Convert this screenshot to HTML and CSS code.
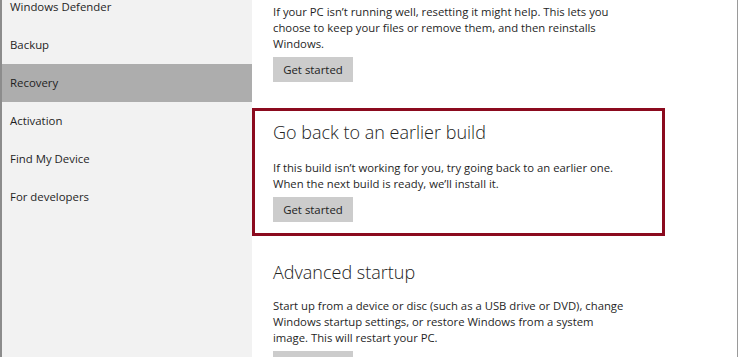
FILE: index.html
```html
<!DOCTYPE html>
<html lang="en">
<head>
  <meta charset="UTF-8">
  <title>Update &amp; security - Recovery</title>
  <link rel="stylesheet" href="styles.css">
</head>
<body>

  <div class="window">
    <div class="sidebar">
      <ul class="nav">
        <li>Windows Defender</li>
        <li>Backup</li>
        <li class="active">Recovery</li>
        <li>Activation</li>
        <li>Find My Device</li>
        <li>For developers</li>
      </ul>
    </div>

    <div class="content">
      <div class="section first">
        <p>If your PC isn’t running well, resetting it might help. This lets you
          choose to keep your files or remove them, and then reinstalls
          Windows.</p>
        <button class="btn">Get started</button>
      </div>

      <div class="section highlight">
        <h2>Go back to an earlier build</h2>
        <p>If this build isn’t working for you, try going back to an earlier one.
          When the next build is ready, we’ll install it.</p>
        <button class="btn">Get started</button>
      </div>

      <div class="section last">
        <h2>Advanced startup</h2>
        <p>Start up from a device or disc (such as a USB drive or DVD), change
          Windows startup settings, or restore Windows from a system
          image. This will restart your PC.</p>
        <button class="btn">Restart now</button>
      </div>
    </div>
  </div>

</body>
</html>
```

FILE: styles.css
```css
html, body {
  margin: 0;
  height: 357px;
  overflow: hidden;
  background: #fff;
}
body {
  font-family: "Open Sans", "Noto Sans", Arial, sans-serif;
  color: #1f1f1f;
}
.window {
  display: flex;
  width: 737px;
  height: 357px;
  border-right: 1px solid #9a9a9a;
}
.sidebar {
  width: 250px;
  flex-shrink: 0;
  background: #f2f2f2;
  border-left: 2px solid #8c8c8c;
}
.nav {
  list-style: none;
  margin: -12px 0 0;
  padding: 0;
}
.nav li {
  height: 38px;
  line-height: 38px;
  padding-left: 8px;
  font-size: 11.4px;
}
.nav li.active {
  background: #adadad;
}
.content {
  flex: 1;
}
.section {
  width: 389px;
  padding: 0 0 0 18px;
  border: 3px solid transparent;
}
.section.first {
  margin-top: -3px;
  padding-top: 7px;
  padding-bottom: 23px;
  border-top: 0;
}
.section.highlight {
  border-color: #8b0a1e;
  padding-top: 8px;
  padding-bottom: 11px;
}
.section.last {
  padding-top: 20px;
}
.section h2 {
  margin: 0 0 15px;
  font-size: 18px;
  font-weight: 300;
  line-height: 26px;
  color: #222;
}
.section.last h2 {
  margin-bottom: 13px;
}
.section p {
  margin: 0;
  max-width: 352px;
  font-size: 11.3px;
  line-height: 16px;
}
.btn {
  display: block;
  margin-top: 5px;
  width: 80px;
  height: 25px;
  padding: 0;
  border: none;
  background: #cccccc;
  font-family: inherit;
  font-size: 11.4px;
  color: #222;
}
```
